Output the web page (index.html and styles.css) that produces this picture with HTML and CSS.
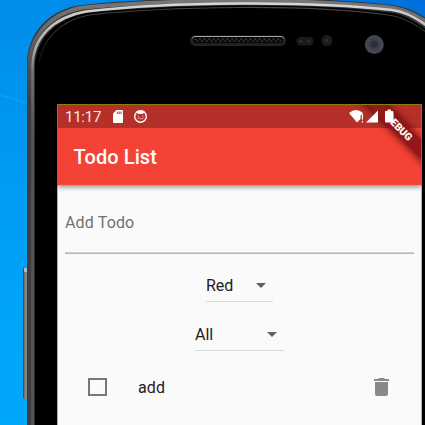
FILE: index.html
```
<!DOCTYPE html>
<html lang="en">
<head>
<meta charset="utf-8">
<title>Todo List</title>
<link rel="stylesheet" href="styles.css">
</head>
<body>
<div class="desktop">
  <svg class="device" viewBox="0 0 425 425" aria-hidden="true">
    <defs>
      <linearGradient id="button" x1="0" x2="1"><stop offset="0" stop-color="#333"/><stop offset=".35" stop-color="#888"/><stop offset="1" stop-color="#777"/></linearGradient>
      <linearGradient id="shine" gradientUnits="userSpaceOnUse" x1="0" y1="0" x2="0" y2="130"><stop offset="0" stop-color="#d8d8d8"/><stop offset=".35" stop-color="#b0b0b0"/><stop offset=".55" stop-color="#777"/><stop offset="1" stop-color="#565656"/></linearGradient>
      <linearGradient id="rim" gradientUnits="userSpaceOnUse" x1="0" y1="0" x2="0" y2="100"><stop offset="0" stop-color="#777"/><stop offset="1" stop-color="#3e3e3e"/></linearGradient>
      <linearGradient id="slot" x1="0" y1="0" x2="0" y2="1"><stop offset="0" stop-color="#aaa"/><stop offset=".5" stop-color="#333"/><stop offset="1" stop-color="#333"/></linearGradient>
      <linearGradient id="bevel" gradientUnits="userSpaceOnUse" x1="0" y1="8" x2="0" y2="60"><stop offset="0" stop-color="#444"/><stop offset="1" stop-color="#111"/></linearGradient>
      <pattern id="mesh" width="4.6" height="4" patternUnits="userSpaceOnUse" x="194" y="38"><circle cx="1.3" cy="1.2" r="1" fill="#3b3b3b"/><circle cx="3.6" cy="3" r="1" fill="#303030"/></pattern>
    </defs>
    <path d="M0 95 Q14 98 28 104" fill="none" stroke="#25a9fb" stroke-width="2" opacity=".35"/>
    <rect x="23" y="267" width="6" height="132" rx="2" fill="url(#button)"/>
    <rect x="24" y="268" width="4" height="4" rx="1" fill="#bbb"/>
    <path d="M27 440V65C27 32 50 9 82 5Q150 -2 240 -2T392 5Q412 7 440 27V440Z" fill="#333"/>
    <path d="M29.500 440V65C30 35 52 12 84 7.500Q150 1 240 1T390 7.500Q410 9 440 31" fill="none" stroke="url(#rim)" stroke-width="4"/>
    <path d="M32.500 440V67C32.500 38 53 17 86 11.500Q150 4 240 3.500T392 10Q412 12 440 36" fill="none" stroke="url(#shine)" stroke-width="2.600"/>
    <path d="M35 440V68C35 39 56 18 88 13Q150 6 240 5.500T390 12.500Q408 14 440 40V440Z" fill="#000"/>
    <path d="M39 62C43 38 62 20 89 15Q150 8 240 7.500T388 15Q410 17 440 43" fill="none" stroke="url(#bevel)" stroke-width="1.200"/>
    <rect x="190.500" y="36" width="95" height="9.500" rx="4" fill="#111" stroke="#222"/>
    <rect x="192" y="36.500" width="92" height="7.500" rx="3" fill="#080808" stroke="url(#slot)"/>
    <rect x="194" y="38" width="88" height="4" fill="url(#mesh)"/>
    <rect x="296.500" y="37" width="17" height="8.500" rx="4.200" fill="#1b1b1b"/>
    <circle cx="301" cy="41.300" r="1.500" fill="#303030"/><circle cx="308.500" cy="41.300" r="1.500" fill="#303030"/>
    <circle cx="327" cy="40.500" r="5.500" fill="#1b1b1b"/><circle cx="327" cy="40.500" r="2" fill="#2b2b2b"/>
    <circle cx="374.300" cy="44.600" r="9.500" fill="#43474f"/><circle cx="374.300" cy="44.300" r="6" fill="#3b4048"/><circle cx="374.300" cy="44.300" r="3.500" fill="#2b3038"/>
  </svg>

  <main class="screen">
    <div class="status">
      <span class="clock">11:17</span>
      <svg class="sd" width="10" height="13" viewBox="0 0 10 13"><path d="M3.500 0H9Q10 0 10 1V12Q10 13 9 13H1Q0 13 0 12V3.500Z" fill="#fff"/><path d="M4.300 1.500V4M6.200 1.500V4M8.100 1.500V4" stroke="#b53029"/></svg>
      <svg class="face" width="13" height="13" viewBox="0 0 13 13"><circle cx="6.500" cy="6.500" r="5.800" fill="none" stroke="#fff" stroke-width="1.400"/><path d="M2 1.800Q6.500 -1 11 1.800L8.500 4H4.500Z" fill="#fff"/><path d="M3.500 6H5M8 6H9.500M3.500 8.500L5.500 7.800L7 9L9.500 8" fill="none" stroke="#fff" stroke-width=".8" opacity=".7"/></svg>
      <svg class="signals" width="50" height="15" viewBox="0 0 50 15"><path d="M0 4Q7 -2 14 4L11.500 6.500V10L8 13.500Z" fill="#fff"/><path d="M13.400 5V10.500M13.400 12V13.500" stroke="#fff" stroke-width="1.300"/><path d="M17 13.500L29 1.500V13.500Z" fill="#fff"/><path d="M36.500 2H38.500V.5H42V2H43Q44.500 2 44.500 3V12.500Q44.500 13.500 43.500 13.500H37Q36 13.500 36 12.500V3Q36 2 36.500 2Z" fill="#fff"/></svg>
    </div>
    <header class="appbar"><h1>Todo List</h1></header>
    <section class="content">
      <div class="field">Add Todo</div>
      <div class="select color"><span>Red</span><svg class="caret" width="10" height="5" viewBox="0 0 10 5"><path d="M0 0H10L5 5Z" fill="#616161"/></svg></div>
      <div class="select filter"><span>All</span><svg class="caret" width="10" height="5" viewBox="0 0 10 5"><path d="M0 0H10L5 5Z" fill="#616161"/></svg></div>
      <div class="todo">
        <span class="checkbox"></span>
        <span class="label">add</span>
        <svg class="trash" width="15" height="18" viewBox="0 0 15 18"><path d="M0 1H4L5 0H10L11 1H15V3H0ZM1 4H14V16Q14 18 12 18H3Q1 18 1 16Z" fill="#888"/></svg>
      </div>
    </section>
    <div class="ribbon-clip"><div class="ribbon">DEBUG</div></div>
  </main>
</div>
</body>
</html>
```
FILE: styles.css
```
* { box-sizing: border-box; }
body { margin: 0; font-family: Roboto, sans-serif; }
.desktop {
  position: relative;
  width: 425px;
  height: 425px;
  overflow: hidden;
  padding: 104px 3px 0 57px;
  background: linear-gradient(90deg, transparent 0 60px, #006fdb 425px) top / 100% 60px no-repeat,
    linear-gradient(180deg, #008ceb, #0098f3 35%, #00a5fa 75%, #00a8fb);
}
.device { position: absolute; inset: 0; width: 425px; height: 425px; }
.screen {
  position: relative;
  height: 330px;
  border: 1px solid #a9cf22;
  background: #fafafa;
  display: flex;
  flex-direction: column;
}
.screen::after {
  content: "";
  position: absolute;
  inset: -1px -1px auto;
  height: 81px;
  border: 1px solid #867e08;
  border-bottom: 0;
}
.status {
  height: 23px;
  flex: none;
  display: flex;
  align-items: center;
  padding: 0 22px 0 7px;
  background: #b53029;
  color: #fff;
}
.clock { width: 36px; font-size: 15px; line-height: 23px; letter-spacing: -0.25px; padding-top: 1px; color: #f7e8e7; }
.sd { margin-left: 12px; }
.face { margin-left: 11px; }
.signals { margin-left: auto; position: relative; z-index: 2; }
.appbar {
  height: 57px;
  flex: none;
  padding: 0 15.5px;
  display: flex;
  align-items: center;
  background: #f44336;
  color: #fff;
  box-shadow: 0 2px 5px rgba(0, 0, 0, .45);
  clip-path: inset(0 0 -12px);
}
h1 { margin: 0; font-size: 20px; line-height: 24px; font-weight: 500; letter-spacing: 0.1px; }
.content { padding: 0 7px; color: #212121; font-size: 16px; }
.field {
  height: 69px;
  padding-top: 28px;
  line-height: 20px;
  color: #717171;
  letter-spacing: 0.15px;
  border-bottom: 1px solid #b5b5b5;
  box-shadow: inset 0 -1px #d2d2d2;
}
.select {
  display: flex;
  justify-content: space-between;
  align-items: center;
  margin: 0 auto;
  border-bottom: 1px solid #d8d8d8;
}
.color { width: 67px; height: 33px; margin-top: 15px; padding-right: 7px; }
.filter { width: 89px; height: 33px; margin-top: 16px; padding-right: 7px; }
.todo { display: flex; align-items: center; height: 40px; margin-top: 16px; padding: 0 25px 0 23px; }
.checkbox { width: 19px; height: 18px; border: 2px solid #777; }
.label { margin-left: 31px; letter-spacing: 0.1px; }
.trash { margin-left: auto; }
.ribbon-clip { position: absolute; inset: 0 0 auto auto; width: 80px; height: 80px; overflow: hidden; z-index: 1; }
.ribbon {
  position: absolute;
  left: -2px;
  top: 16px;
  width: 120px;
  height: 13px;
  transform: rotate(45deg);
  background: #941719;
  box-shadow: 0 0 7px 2px rgba(70, 0, 0, .7);
  color: #fff;
  font-size: 10.2px;
  line-height: 13px;
  font-weight: 900;
  text-align: center;
}
```
